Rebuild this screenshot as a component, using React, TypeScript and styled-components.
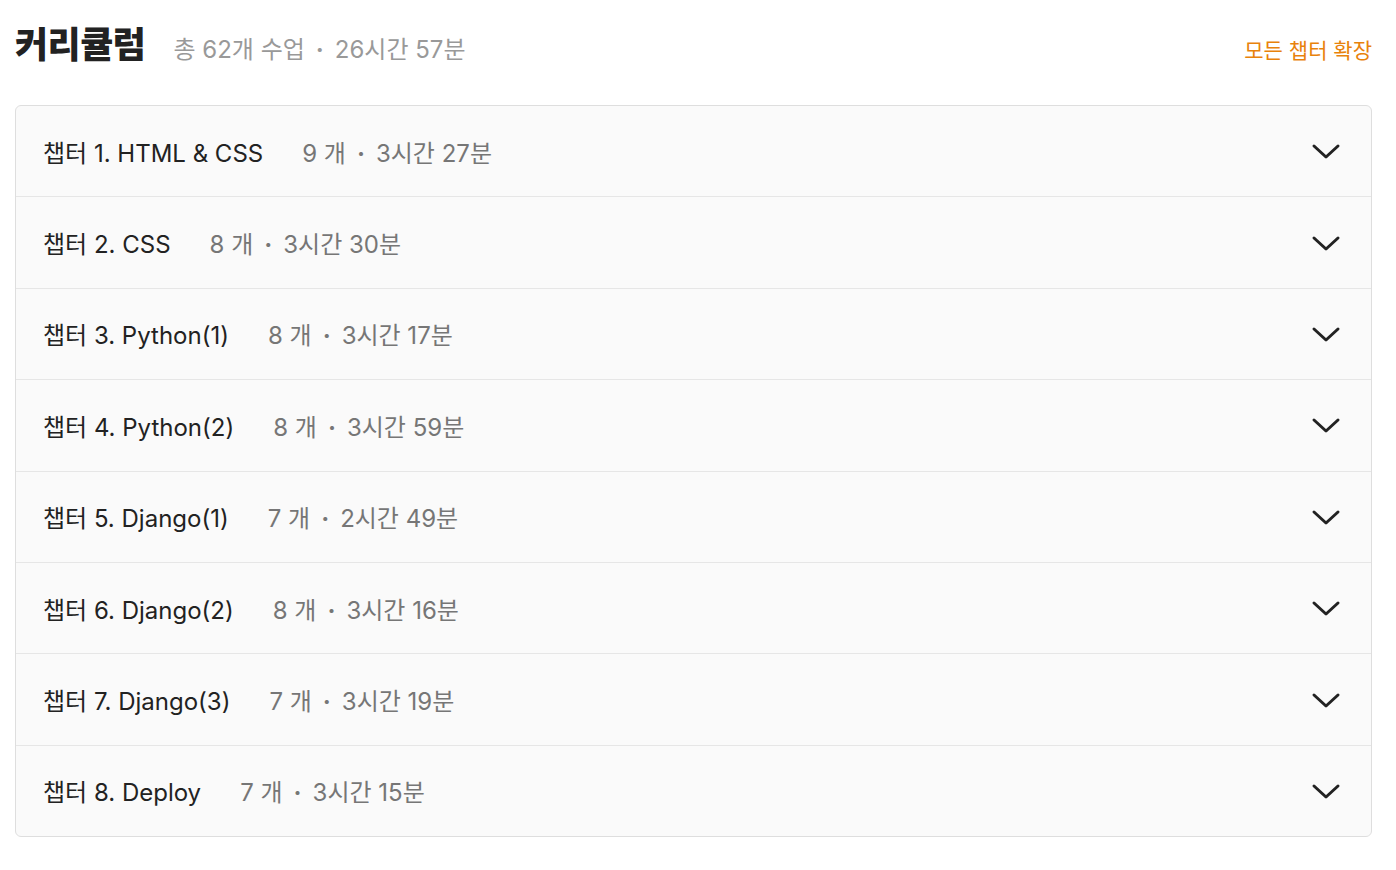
import React from "react";
import styled, { createGlobalStyle } from "styled-components";

type Chapter = {
  title: string;
  count: number;
  duration: string;
};

const chapters: Chapter[] = [
  { title: "챕터 1. HTML & CSS", count: 9, duration: "3시간 27분" },
  { title: "챕터 2. CSS", count: 8, duration: "3시간 30분" },
  { title: "챕터 3. Python(1)", count: 8, duration: "3시간 17분" },
  { title: "챕터 4. Python(2)", count: 8, duration: "3시간 59분" },
  { title: "챕터 5. Django(1)", count: 7, duration: "2시간 49분" },
  { title: "챕터 6. Django(2)", count: 8, duration: "3시간 16분" },
  { title: "챕터 7. Django(3)", count: 7, duration: "3시간 19분" },
  { title: "챕터 8. Deploy", count: 7, duration: "3시간 15분" },
];

const GlobalStyle = createGlobalStyle`
  body {
    margin: 0;
    background: #ffffff;
    font-family: "Inter", "Noto Sans CJK KR", sans-serif;
    color: #222222;
  }
`;

const Page = styled.div`
  padding: 16px 24px 0 15px;
`;

const Header = styled.div`
  display: flex;
  align-items: baseline;
  justify-content: space-between;
  margin-bottom: 37px;
`;

const HeaderLeft = styled.div`
  display: flex;
  align-items: baseline;
  gap: 28px;
`;

const Title = styled.h2`
  margin: 0;
  font-size: 36px;
  font-weight: 800;
  color: #222222;
  letter-spacing: -0.5px;
`;

const Summary = styled.span`
  font-size: 24px;
  color: #999999;
`;

const ExpandAll = styled.button`
  border: none;
  background: transparent;
  padding: 0;
  font-family: inherit;
  font-size: 21px;
  color: #e8820c;
  cursor: pointer;
`;

const List = styled.div`
  border: 1px solid #dedede;
  border-radius: 6px;
  background: #fafafa;
  overflow: hidden;
`;

const Row = styled.div`
  display: flex;
  align-items: center;
  height: 90.4px;
  padding: 0 30px 0 27px;
  border-top: 1px solid #e6e6e6;

  &:first-child {
    border-top: none;
  }
`;

const ChapterTitle = styled.span`
  font-size: 24px;
  color: #222222;
`;

const Meta = styled.span`
  margin-left: 39px;
  font-size: 24px;
  color: #767676;
  flex: 1;
`;

const Dot = styled.span`
  margin: 0 11px;
  font-weight: 700;
`;

const Chevron = () => (
  <svg width="30" height="22" viewBox="0 0 30 22" fill="none">
    <path
      d="M3 6 L15 17 L27 6"
      stroke="#222222"
      strokeWidth="3"
      strokeLinecap="round"
      strokeLinejoin="round"
    />
  </svg>
);

const App = () => {
  return (
    <Page>
      <GlobalStyle />
      <Header>
        <HeaderLeft>
          <Title>커리큘럼</Title>
          <Summary>
            총 62개 수업<Dot>·</Dot>26시간 57분
          </Summary>
        </HeaderLeft>
        <ExpandAll>모든 챕터 확장</ExpandAll>
      </Header>
      <List>
        {chapters.map((c) => (
          <Row key={c.title}>
            <ChapterTitle>{c.title}</ChapterTitle>
            <Meta>
              {c.count} 개<Dot>·</Dot>
              {c.duration}
            </Meta>
            <Chevron />
          </Row>
        ))}
      </List>
    </Page>
  );
};

export default App;
